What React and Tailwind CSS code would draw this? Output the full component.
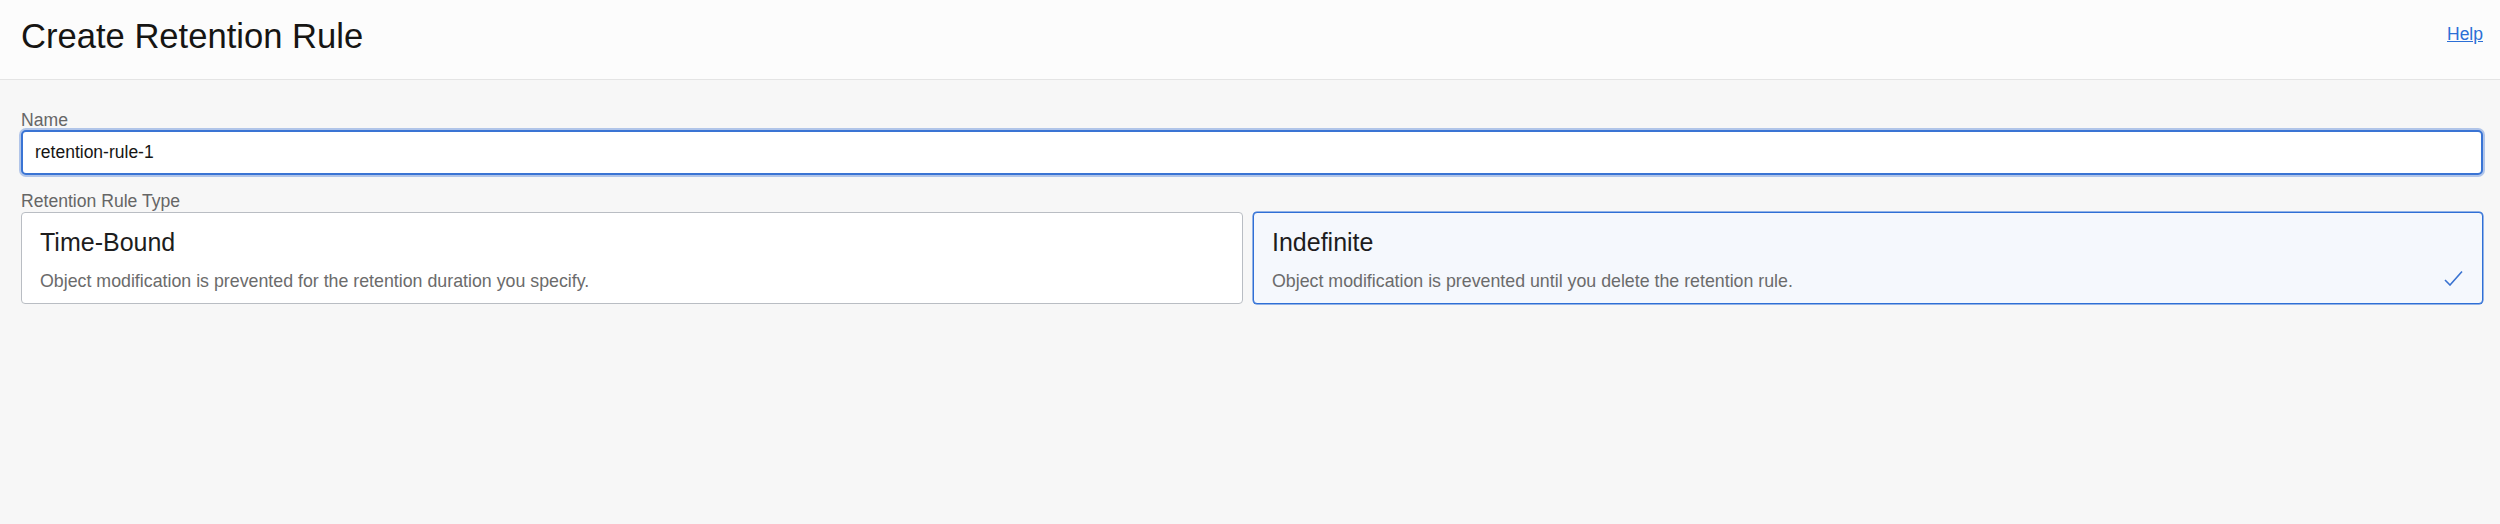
import { useState } from "react";

const ruleTypes = [
  {
    id: "time-bound",
    title: "Time-Bound",
    description: "Object modification is prevented for the retention duration you specify.",
  },
  {
    id: "indefinite",
    title: "Indefinite",
    description: "Object modification is prevented until you delete the retention rule.",
  },
];

function CheckIcon() {
  return (
    <svg width="19" height="16" viewBox="0 0 19 16" fill="none">
      <path d="M1 10L6 15L18 1.5" stroke="#3a73d1" strokeWidth="1.6" />
    </svg>
  );
}

function RuleCard({ rule, selected, onSelect }) {
  return (
    <div
      role="radio"
      aria-checked={selected}
      onClick={() => onSelect(rule.id)}
      className={`relative h-[92px] cursor-pointer rounded-[4px] border px-[18px] pt-[14px] ${
        selected
          ? "border-[#2f6fd6] bg-[#f5f8fd] shadow-[0_0_0_0.5px_#2f6fd6]"
          : "border-[#b9bdc3] bg-white"
      }`}
    >
      <div className="text-[25px] leading-[30px] text-[#1d1d1d]">{rule.title}</div>
      <div className="mt-[14px] text-[17.8px] leading-[20px] text-[#6b6b6b]">
        {rule.description}
      </div>
      {selected && (
        <span className="absolute right-[19px] bottom-[17px]">
          <CheckIcon />
        </span>
      )}
    </div>
  );
}

export default function App() {
  const [name, setName] = useState("retention-rule-1");
  const [ruleType, setRuleType] = useState("indefinite");

  return (
    <div className="min-h-screen bg-[#f7f7f7] font-['Liberation_Sans',Arial,sans-serif]">
      <header className="flex h-[80px] items-start justify-between border-b border-[#e4e4e4] bg-[#fcfcfc] pt-[16px] pr-[17px] pl-[21px]">
        <h1 className="text-[34.6px] leading-[40px] text-[#161513]">Create Retention Rule</h1>
        <a href="#" className="mt-[8px] text-[17.5px] leading-[20px] text-[#2b6fd6] underline">
          Help
        </a>
      </header>

      <main className="pt-[30px] pr-[17px] pl-[21px]">
        <label className="block text-[17.6px] leading-[20px] text-[#666666]">Name</label>
        <input
          value={name}
          onChange={(e) => setName(e.target.value)}
          className="block h-[45px] w-full rounded-[5px] border-2 border-[#3a74d4] bg-white px-[12px] text-[17.5px] text-[#161513] shadow-[0_0_0_2px_rgba(90,135,215,0.45)] outline-none"
        />

        <label className="mt-[16px] mb-[1px] block text-[17.6px] leading-[20px] text-[#666666]">
          Retention Rule Type
        </label>
        <div className="grid grid-cols-[1222fr_1230fr] gap-[10px]">
          {ruleTypes.map((rule) => (
            <RuleCard
              key={rule.id}
              rule={rule}
              selected={ruleType === rule.id}
              onSelect={setRuleType}
            />
          ))}
        </div>
      </main>
    </div>
  );
}
